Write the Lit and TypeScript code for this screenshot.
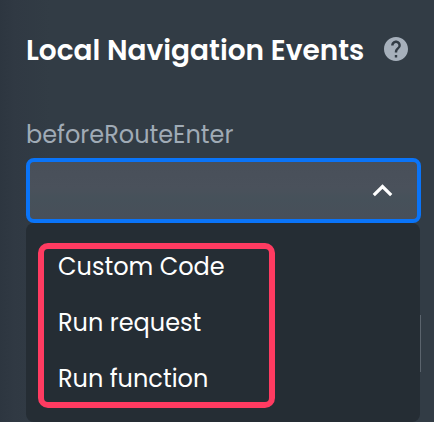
import { LitElement, html, css } from "lit";
import { customElement, state } from "lit/decorators.js";

@customElement("help-icon")
class HelpIcon extends LitElement {
  static styles = css`
    :host { display: block; width: 24px; height: 24px; }
    svg { display: block; fill: #a6b0bb; }
  `;
  render() {
    return html`<svg width="24" height="24" viewBox="2 2 20 20" aria-label="Help">
      <path d="M12 2C6.48 2 2 6.48 2 12s4.48 10 10 10 10-4.480 10-10S17.520 2 12 2zm1 17h-2v-2h2v2zm2.070-7.750l-.9.920C13.450 12.900 13 13.500 13 15h-2v-.5c0-1.100.450-2.100 1.170-2.830l1.240-1.260c.370-.360.590-.860.590-1.410 0-1.100-.9-2-2-2s-2 .9-2 2H8c0-2.210 1.790-4 4-4s4 1.790 4 4c0 .880-.360 1.680-.930 2.250z"/>
    </svg>`;
  }
}

@customElement("app-root")
class AppRoot extends LitElement {
  @state() private options = ["Custom Code", "Run request", "Run function"];

  static styles = css`
    :host {
      display: block;
      box-sizing: border-box;
      position: relative;
      width: 434px;
      height: 422px;
      overflow: hidden;
      padding: 30px 13px 0 26px;
      background: linear-gradient(90deg, #2d3640 0, #303943 14px, #323c45 50px, #323c45 100%);
      font-family: Poppins, Inter, "Open Sans", sans-serif;
      color: #fff;
    }
    .heading { display: flex; align-items: center; height: 40px; }
    h1 {
      margin: 0;
      width: 358px;
      font-size: 28px;
      line-height: 42px;
      padding-top: 1px;
      font-weight: 600;
      white-space: nowrap;
    }
    help-icon { margin-top: -2px; flex: none; }
    .label {
      margin-top: 47px;
      height: 41px;
      font-size: 24px;
      line-height: 36px;
      color: #a0abb6;
    }
    .field {
      box-sizing: border-box;
      display: flex;
      align-items: center;
      justify-content: flex-end;
      height: 65px;
      padding-right: 24px;
      border: 4px solid #0a74f8;
      border-radius: 8px;
      background: linear-gradient(180deg, #484f59 0, #4a515b 45%, #46515a 65%, #484f59 100%);
    }
    .chevron { display: block; }
    .menu {
      box-sizing: border-box;
      width: 394px;
      height: 199px;
      padding: 20px 12px 0;
      border-radius: 8px;
      background: #252d34;
    }
    .options {
      box-sizing: border-box;
      margin: 0;
      width: 237px;
      height: 165px;
      padding: 0 0 0 14px;
      border: 6px solid #ff3b61;
      border-radius: 10px;
      list-style: none;
    }
    .option {
      height: 56px;
      line-height: 36px;
      font-size: 24px;
      white-space: nowrap;
    }
    .behind {
      position: absolute;
      left: 420px;
      top: 315px;
      width: 1px;
      height: 57px;
      background: #5b646d;
    }
  `;

  render() {
    return html`
      <div class="heading"><h1>Local Navigation Events</h1><help-icon></help-icon></div>
      <div class="label">beforeRouteEnter</div>
      <div class="field">
        <svg class="chevron" width="22" height="14" viewBox="0 0 22 14">
          <path d="M2.800 11.200 L11.500 2.500 L20.200 11.200" fill="none" stroke="#fff" stroke-width="3.200"/>
        </svg>
      </div>
      <div class="menu">
        <ul class="options">
          ${this.options.map((label) => html`<li class="option">${label}</li>`)}
        </ul>
      </div>
      <div class="behind"></div>
    `;
  }
}
